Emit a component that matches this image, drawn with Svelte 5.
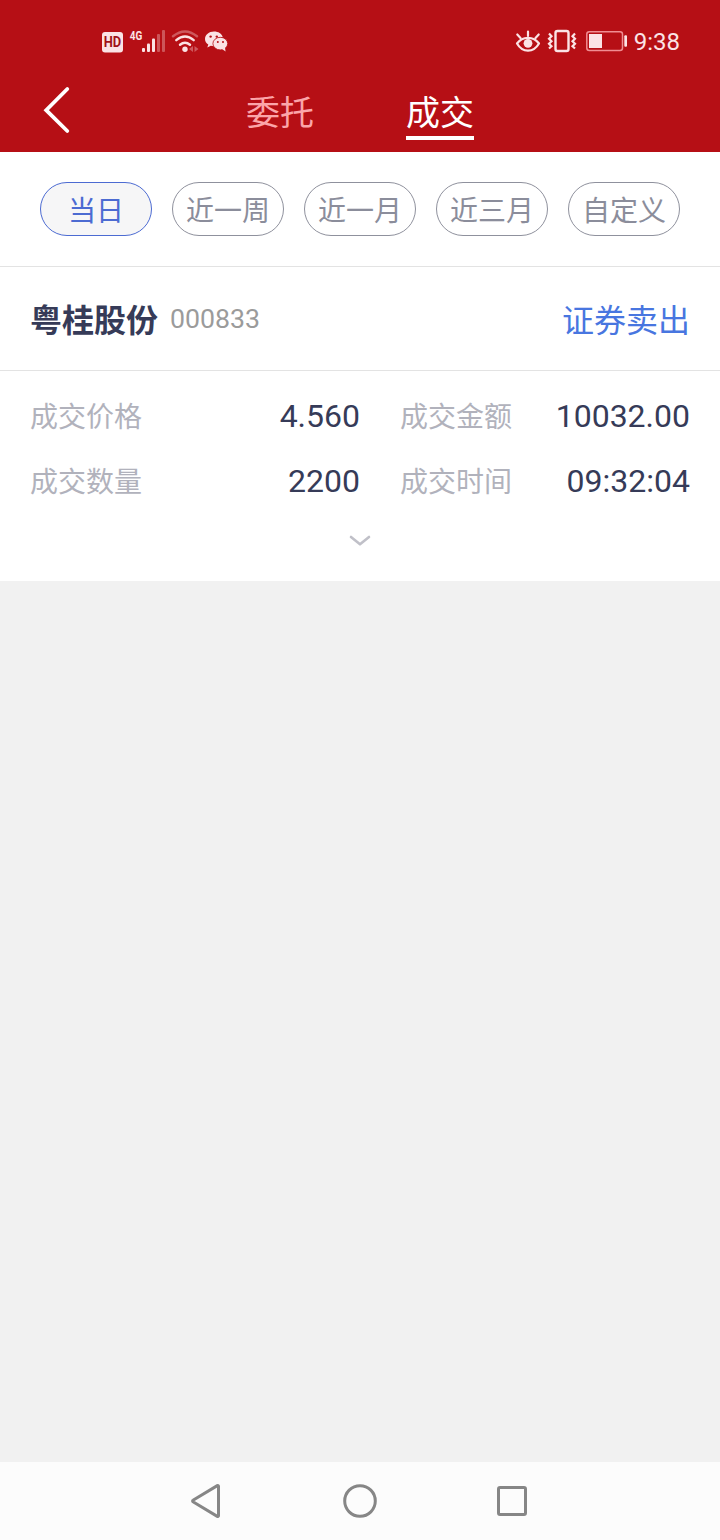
<script lang="ts">
  interface Field {
    label: string;
    value: string;
  }

  interface Deal {
    name: string;
    code: string;
    side: string;
    fields: Field[];
  }

  const tabs = ["委托", "成交"];
  const ranges = ["当日", "近一周", "近一月", "近三月", "自定义"];

  const deals: Deal[] = [
    {
      name: "粤桂股份",
      code: "000833",
      side: "证券卖出",
      fields: [
        { label: "成交价格", value: "4.560" },
        { label: "成交金额", value: "10032.00" },
        { label: "成交数量", value: "2200" },
        { label: "成交时间", value: "09:32:04" },
      ],
    },
  ];

  let activeTab = $state("成交");
  let activeRange = $state("当日");
</script>

<div class="screen">
  <header>
    <div class="status">
      <svg width="130" height="28" viewBox="100 28 130 28" fill="#fbe3e5">
        <rect x="102" y="32" width="21" height="20.5" rx="3" />
        <text x="112.5" y="47.2" class="hd" text-anchor="middle" textLength="17.5" lengthAdjust="spacingAndGlyphs">HD</text>
        <text x="129.8" y="40" class="net" textLength="12.5" lengthAdjust="spacingAndGlyphs">4G</text>
        <rect x="142" y="48" width="3" height="4" rx="1" />
        <rect x="147" y="43.5" width="3" height="8.5" rx="1" />
        <rect x="152" y="38.5" width="3" height="13.5" rx="1" />
        <rect x="157" y="34" width="3" height="18" rx="1" opacity="0.33" />
        <rect x="162" y="30" width="3" height="22" rx="1" opacity="0.33" />
        <g fill="none" stroke="#fbe3e5" stroke-width="2.4" stroke-linecap="round">
          <path d="M173 36.3Q185 26.5 197 36.3" opacity="0.35" />
          <path d="M176.3 40.2Q185 32.8 193.7 40.2" />
          <path d="M180 44.8Q185 40.7 190 44.8" />
        </g>
        <circle cx="185" cy="49.3" r="2.7" />
        <path d="M193 46v6l-4-3zM194.5 46v6l4-3z" opacity="0.35" />
        <path d="M214 31.5c-5 0-9 3.3-9 7.4 0 2.3 1.3 4.3 3.3 5.7l-1 3 3.5-1.8c1 .3 2 .5 3.2.5h.4c-1.5-5 2.5-9.6 8.3-9.4-.9-3.2-4.4-5.4-8.7-5.4z" />
        <ellipse cx="220.3" cy="43.6" rx="7.4" ry="6.3" stroke="#b60f15" stroke-width="0.8" />
        <path d="M222 49l3.6 2.5-.7-4z" />
        <g fill="#b60f15">
          <circle cx="210.6" cy="36.6" r="1.2" />
          <circle cx="216.8" cy="36.6" r="1.2" />
          <circle cx="217.8" cy="42" r="1" />
          <circle cx="223" cy="42" r="1" />
        </g>
      </svg>
      <div class="status-right">
        <svg width="114" height="28" viewBox="514 28 114 28" fill="none" stroke="#fbe3e5">
          <path d="M517 43.5C522.5 36 533.5 36 539 43.5C533.5 53 522.5 53 517 43.5z" stroke-width="2.2" stroke-linejoin="round" />
          <circle cx="528" cy="43.3" r="4.4" fill="#fbe3e5" stroke="none" />
          <path d="M528 36v-4.5M520.5 38l-3.2-3.5M535.5 38l3.2-3.5" stroke-width="2.2" stroke-linecap="round" />
          <rect x="555.5" y="31" width="13" height="20" rx="2" stroke-width="2.4" />
          <path d="M549 33.5l2.500 2.700-2.500 2.500 2.500 2.500-2.500 2.500 2.500 2.500-2.500 2.300M575 33.500l-2.500 2.700 2.500 2.500-2.500 2.500 2.500 2.500-2.500 2.500 2.500 2.300" stroke-width="2.2" />
          <rect x="586.8" y="31.8" width="35.7" height="18.7" rx="2.5" stroke="#f08d92" stroke-width="1.5" />
          <rect x="589" y="34" width="13" height="14" fill="#fbe3e5" stroke="none" />
          <rect x="624.3" y="35.3" width="2.7" height="11.5" rx="1" fill="#fbe3e5" stroke="none" />
        </svg>
        <span class="time">9:38</span>
      </div>
    </div>
    <nav class="tabs">
      <button class="back" aria-label="返回">
        <svg width="30" height="48" viewBox="0 0 30 48">
          <path d="M25.3 3L4.2 24.2 25.3 45" fill="none" stroke="#fff" stroke-width="3.8" stroke-linecap="round" stroke-linejoin="miter" />
        </svg>
      </button>
      {#each tabs as tab}
        <button class="tab" class:active={tab === activeTab} onclick={() => (activeTab = tab)}>{tab}</button>
      {/each}
    </nav>
  </header>

  <div class="ranges">
    {#each ranges as range}
      <button class="pill" class:active={range === activeRange} onclick={() => (activeRange = range)}>{range}</button>
    {/each}
  </div>

  <main>
    {#each deals as deal}
      <article>
        <div class="title">
          <span class="name">{deal.name}</span>
          <span class="code">{deal.code}</span>
          <span class="side">{deal.side}</span>
        </div>
        <div class="fields">
          {#each deal.fields as field}
            <div class="field">
              <span class="label">{field.label}</span>
              <span class="value">{field.value}</span>
            </div>
          {/each}
        </div>
        <svg class="more" width="24" height="14" viewBox="0 0 24 14">
          <path d="M3 3l9 7.3 9-7.3" fill="none" stroke="#c0c0c8" stroke-width="2.6" stroke-linecap="round" stroke-linejoin="round" />
        </svg>
      </article>
    {/each}
  </main>

  <footer>
    <svg width="36" height="36" viewBox="0 0 36 36">
      <path d="M28.5 3.2v29.6a.8.8 0 0 1-1.2.6L3 18.700a.8.8 0 0 1 0-1.400L27.300 2.600a.8.8 0 0 1 1.200.6z" />
    </svg>
    <svg width="36" height="36" viewBox="0 0 36 36"><circle cx="18" cy="18" r="15.3" /></svg>
    <svg width="36" height="36" viewBox="0 0 36 36"><rect x="4.5" y="4.5" width="27" height="27" rx="1.5" /></svg>
  </footer>
</div>

<style>
  :global(body) { background: #f1f1f1; }
  .screen {
    display: flex; flex-direction: column;
    width: 720px; height: 1540px;
    background: #f1f1f1;
    font-family: Roboto, "Noto Sans CJK SC", sans-serif;
  }
  button {
    margin: 0; padding: 0; border: none; background: none;
    font-family: inherit; cursor: pointer;
  }
  svg { display: block; }

  header { height: 152px; background: #b60f15; }
  .status {
    display: flex; justify-content: space-between; align-items: flex-start;
    height: 56px; padding: 28px 40px 0 100px; box-sizing: border-box;
  }
  .status-right { display: flex; gap: 6px; }
  .time { color: #fbe3e5; font-size: 24px; line-height: 28px; }
  .hd { font: bold 14px Roboto, sans-serif; fill: #a01218; }
  .net { font: bold 13.5px Roboto, sans-serif; }

  .tabs {
    display: grid; grid-template-columns: 68px 68px 68px;
    column-gap: 92px; align-items: start;
    padding: 30px 0 0 246px; position: relative;
  }
  .back { position: absolute; left: 42px; top: 30px; }
  .tab {
    height: 54px; padding-top: 4px; box-sizing: border-box;
    border-bottom: 4px solid transparent;
    color: #fba5a9; font-size: 34px; line-height: 46px;
  }
  .tab.active { color: #fff; border-color: #fff; }

  .ranges {
    display: flex; gap: 20px;
    padding: 30px 40px; background: #fff;
    border-bottom: 1px solid #e3e3e3;
  }
  .pill {
    flex: 1; height: 54px; box-sizing: border-box; padding-top: 6px;
    border: 1px solid #8f919d; border-radius: 27px;
    color: #8b8d9b; font-size: 28px; line-height: 46px;
    white-space: nowrap;
  }
  .pill.active { background: #f6f6f7; border-color: #4c6bd2; color: #4c6bd2; }

  main { flex: 1; }
  article { height: 314px; background: #fff; }
  .title {
    display: flex; align-items: center;
    height: 103px; padding: 0 30px;
    border-bottom: 1px solid #e3e3e3;
  }
  .name { padding-bottom: 2px; color: #363b58; font-size: 32px; font-weight: 700; }
  .code { margin-left: 12px; color: #9b9b9b; font-size: 26.7px; }
  .side { margin-left: auto; padding-bottom: 2px; color: #4876e0; font-size: 32px; }

  .fields {
    display: grid; grid-template-columns: 330px 290px;
    column-gap: 40px; grid-auto-rows: 65px;
    padding: 12px 30px 0;
  }
  .field { display: flex; align-items: center; justify-content: space-between; }
  .label { padding-bottom: 2px; color: #b1b2bc; font-size: 28px; }
  .value { color: #363b58; font-size: 32px; }
  .more { margin: 21px auto 0; }

  footer {
    display: flex; justify-content: center; align-items: center; gap: 116px;
    height: 78px; background: #fcfcfc;
  }
  footer svg { fill: none; stroke: #868686; stroke-width: 3; }
</style>
